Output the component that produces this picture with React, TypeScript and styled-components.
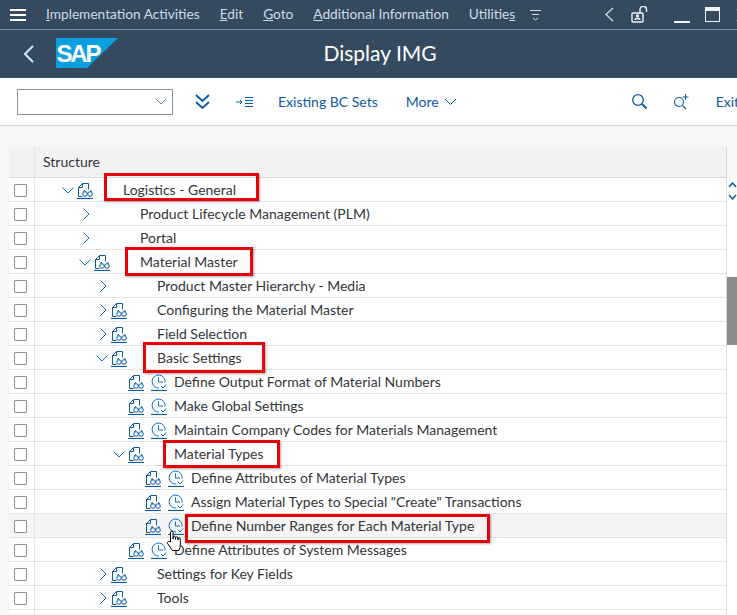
import styled, { createGlobalStyle } from 'styled-components'

type TreeRow = {
  level: number
  label: string
  chevron?: 'open' | 'closed'
  doc?: boolean
  clock?: boolean
  hovered?: boolean
  box?: { left: number; top: number; width: number; height: number }
  cursor?: boolean
}

const ROWS: TreeRow[] = [
  { level: 0, label: 'Logistics - General', chevron: 'open', doc: true, box: { left: -19, top: -8, width: 155, height: 28 } },
  { level: 1, label: 'Product Lifecycle Management (PLM)', chevron: 'closed' },
  { level: 1, label: 'Portal', chevron: 'closed' },
  { level: 1, label: 'Material Master', chevron: 'open', doc: true, box: { left: -15, top: -6, width: 128, height: 29 } },
  { level: 2, label: 'Product Master Hierarchy - Media', chevron: 'closed' },
  { level: 2, label: 'Configuring the Material Master', chevron: 'closed', doc: true },
  { level: 2, label: 'Field Selection', chevron: 'closed', doc: true },
  { level: 2, label: 'Basic Settings', chevron: 'open', doc: true, box: { left: -14, top: -7, width: 122, height: 31 } },
  { level: 3, label: 'Define Output Format of Material Numbers', doc: true, clock: true },
  { level: 3, label: 'Make Global Settings', doc: true, clock: true },
  { level: 3, label: 'Maintain Company Codes for Materials Management', doc: true, clock: true },
  { level: 3, label: 'Material Types', chevron: 'open', doc: true, box: { left: -11, top: -5, width: 117, height: 28 } },
  { level: 4, label: 'Define Attributes of Material Types', doc: true, clock: true },
  { level: 4, label: 'Assign Material Types to Special "Create" Transactions', doc: true, clock: true },
  { level: 4, label: 'Define Number Ranges for Each Material Type', doc: true, clock: true, hovered: true, box: { left: -6, top: -3, width: 305, height: 29 }, cursor: true },
  { level: 3, label: 'Define Attributes of System Messages', doc: true, clock: true },
  { level: 2, label: 'Settings for Key Fields', chevron: 'closed', doc: true },
  { level: 2, label: 'Tools', chevron: 'closed', doc: true },
]

const MENU = [
  { before: '', key: 'I', after: 'mplementation Activities' },
  { before: '', key: 'E', after: 'dit' },
  { before: '', key: 'G', after: 'oto' },
  { before: '', key: 'A', after: 'dditional Information' },
  { before: 'Utilitie', key: 's', after: '' },
]

const GlobalStyle = createGlobalStyle`
  html, body {
    margin: 0;
    padding: 0;
    height: 615px;
    overflow: hidden;
    background: #f7f7f7;
    font-family: Lato, "Open Sans", "Liberation Sans", sans-serif;
  }
`

const Page = styled.div`
  width: 737px;
  height: 615px;
  overflow: hidden;
`

const MenuBar = styled.div`
  height: 29px;
  background: #354a5f;
  border-bottom: 1px solid #7d92ab;
  display: flex;
  align-items: center;
  padding-left: 10px;
  color: #d1dbe6;
  overflow: hidden;
`

const MenuList = styled.div`
  display: flex;
  gap: 20px;
  margin-left: 20px;
  padding-bottom: 3px;
  font-size: 13.7px;
  white-space: nowrap;
`

const MenuControls = styled.div`
  display: flex;
  align-items: center;
  margin-left: 14px;
  flex: none;
`

const TitleBar = styled.div`
  height: 48px;
  background: #354a5f;
  position: relative;
  display: flex;
  align-items: center;
  padding-left: 22px;
`

const Title = styled.div`
  position: absolute;
  left: 0;
  right: 0;
  top: 9px;
  padding-left: 23px;
  text-align: center;
  color: #fff;
  font-size: 21px;
  line-height: 28px;
`

const LogoSlot = styled.span`
  margin-left: 22px;
  margin-top: -2px;
  display: inline-flex;
`

const Toolbar = styled.div`
  height: 47px;
  background: #fff;
  border-bottom: 1px solid #d9d9d9;
  display: flex;
  align-items: center;
  padding-left: 17px;
  color: #0a5ba3;
  font-size: 14px;
  white-space: nowrap;
`

const Combo = styled.div`
  width: 156px;
  height: 26px;
  flex: none;
  border: 1px solid #89919a;
  display: flex;
  align-items: center;
  justify-content: flex-end;
  padding-right: 5px;
  box-sizing: border-box;
`

const ToolLabel = styled.span<{ $left: number }>`
  margin-left: ${(p) => p.$left}px;
  display: inline-flex;
  align-items: center;
  gap: 5px;
`

const ToolIcon = styled.span<{ $left: number }>`
  margin-left: ${(p) => p.$left}px;
  display: inline-flex;
  flex: none;
`

const Content = styled.div`
  padding: 21px 0 0 9px;
  display: flex;
`

const Table = styled.div`
  width: 717px;
  flex: none;
  background: #fff;
  border-right: 1px solid #d9d9d9;
`

const HeadRow = styled.div`
  height: 30px;
  display: flex;
  background: #f2f2f2;
  border-bottom: 1px solid #d9d9d9;
`

const Row = styled.div<{ $hovered?: boolean }>`
  height: 23px;
  display: flex;
  background: ${(p) => (p.$hovered ? '#f5f5f5' : '#fff')};
  border-bottom: 1px solid #e5e5e5;
`

const SelectCell = styled.div`
  width: 26px;
  flex: none;
  border-right: 1px solid #e5e5e5;
  display: flex;
  align-items: center;
  padding: 1px 0 0 5px;
  box-sizing: border-box;
`

const Check = styled.span`
  width: 13px;
  height: 13px;
  box-sizing: border-box;
  border: 1px solid #89919a;
  background: #fff;
  border-radius: 1px;
`

const HeadLabel = styled.div`
  padding-left: 8px;
  line-height: 30px;
  font-size: 14px;
  color: #32363a;
`

const TreeCell = styled.div<{ $level: number }>`
  display: flex;
  align-items: center;
  padding-left: ${(p) => 24 + p.$level * 17}px;
  font-size: 14px;
  color: #32363a;
  white-space: nowrap;
`

const ChevronSlot = styled.span`
  width: 18px;
  flex: none;
  display: flex;
  justify-content: center;
`

const IconSlot = styled.span`
  width: 16px;
  height: 19px;
  flex: none;
  display: flex;
  justify-content: center;
`

const ClockSlot = styled.span`
  width: 30px;
  height: 19px;
  flex: none;
  display: flex;
  padding-left: 7px;
  box-sizing: border-box;
  position: relative;
`

const Label = styled.span`
  position: relative;
`

const RedBox = styled.span`
  position: absolute;
  border: 3px solid #e8000b;
  box-shadow: 1px 1px 2px rgba(0, 0, 0, 0.35);
  box-sizing: border-box;
  pointer-events: none;
`

const Hand = styled.svg`
  position: absolute;
  left: 5px;
  top: 14px;
  z-index: 2;
`

const ScrollRail = styled.div`
  width: 11px;
  height: 440px;
  margin-top: 31px;
  flex: none;
  padding-top: 4px;
  background: #fff;
  display: flex;
  flex-direction: column;
  align-items: center;
  gap: 6px;
  position: relative;
`

const ScrollThumb = styled.div`
  position: absolute;
  top: 99px;
  left: 0;
  width: 11px;
  height: 68px;
  background: #8c8c8c;
`

function Chevron({ open }: { open: boolean }) {
  return (
    <svg width="12" height="12" viewBox="0 0 12 12" fill="none" stroke="#0a6ed1" strokeWidth="1">
      <path d={open ? 'M.5 3.500 6 9 11.500 3.500' : 'M4.500 .5 10 6 4.500 11.500'} />
    </svg>
  )
}

function DocIcon() {
  return (
    <svg width="16" height="19" viewBox="0 0 16 19" fill="none" stroke="#0a5ba3" strokeWidth="1">
      <path d="M5.500 16.500H1.500V7.500L5.500 3.500H11.500V9.500" />
      <path d="M1.500 7.500H5.500V3.500" />
      <path d="M0 18.500H16" strokeWidth="1.200" />
      <circle cx="8" cy="14" r="2.300" />
      <circle cx="13" cy="14" r="2.300" />
      <path d="M10.300 13.500h.4M6.500 12 7.500 10M14.500 12 13.500 10" />
    </svg>
  )
}

function ClockIcon() {
  return (
    <svg width="16" height="19" viewBox="0 0 16 19" fill="none" stroke="#0a6ed1" strokeWidth="1">
      <path d="M14 10.500A6.500 6.500 0 1 0 8 16" />
      <path d="M7.500 5.500V10H12" />
      <path d="M10 14 12 16 15 12.500" />
      <path d="M0 18.500H16" stroke="#0a5ba3" strokeWidth="1.200" />
    </svg>
  )
}

function SapLogo() {
  return (
    <svg width="62" height="30" viewBox="0 0 62 30">
      <path d="M0 0H62L31 30H0Z" fill="#0a9fe0" />
      <text x="0.500" y="24" fontFamily="Liberation Sans" fontWeight="700" fontSize="24" letterSpacing="-2.200" fill="#fff">
        SAP
      </text>
    </svg>
  )
}

export default function App() {
  return (
    <Page>
      <GlobalStyle />
      <MenuBar>
        <svg width="16" height="12" viewBox="0 0 16 12" stroke="#fff" strokeWidth="2" style={{ flex: 'none' }}>
          <path d="M0 1H16M0 6H16M0 11H16" />
        </svg>
        <MenuList>
          {MENU.map((item) => (
            <span key={item.key}>
              {item.before}
              <u>{item.key}</u>
              {item.after}
            </span>
          ))}
        </MenuList>
        <MenuControls>
          <svg width="13" height="12" viewBox="0 0 13 12" fill="none" stroke="#d1dbe6">
            <path d="M1 1.500H12M3 5.500H10M4 9 6.500 11 9 9" />
          </svg>
          <ToolIcon $left={63}>
            <svg width="9" height="15" viewBox="0 0 9 15" fill="none" stroke="#d1dbe6" strokeWidth="1.400">
              <path d="M8 1 1 7.500 8 14" />
            </svg>
          </ToolIcon>
          <ToolIcon $left={17}>
            <svg width="17" height="17" viewBox="0 0 17 17" fill="none" stroke="#f0f4f8" strokeWidth="1.400">
              <rect x="1" y="7" width="11" height="9" rx="1" />
              <path d="M9 7V3.500a3 3 0 0 1 6.500 0V6" />
              <circle cx="6.500" cy="10" r="1" />
              <path d="M4 14c0-2 5-2 5 0" />
            </svg>
          </ToolIcon>
          <ToolIcon $left={26}>
            <svg width="16" height="16" viewBox="0 0 16 16" stroke="#f0f4f8" strokeWidth="2">
              <path d="M0 15H16" />
            </svg>
          </ToolIcon>
          <ToolIcon $left={15}>
            <svg width="15" height="15" viewBox="0 0 15 15" fill="none" stroke="#f0f4f8">
              <rect x="0.500" y="0.500" width="14" height="14" />
              <path d="M0 2.500H15" strokeWidth="3" />
            </svg>
          </ToolIcon>
          <ToolIcon $left={16}>
            <svg width="14" height="14" viewBox="0 0 14 14" fill="none" stroke="#f0f4f8" strokeWidth="1.400">
              <path d="M1 1 13 13M13 1 1 13" />
            </svg>
          </ToolIcon>
        </MenuControls>
      </MenuBar>
      <TitleBar>
        <svg width="12" height="18" viewBox="0 0 12 18" fill="none" stroke="#d1e8ff" strokeWidth="2">
          <path d="M11 1 3 9 11 17" />
        </svg>
        <LogoSlot>
          <SapLogo />
        </LogoSlot>
        <Title>Display IMG</Title>
      </TitleBar>
      <Toolbar>
        <Combo>
          <svg width="12" height="7" viewBox="0 0 12 7" fill="none" stroke="#5b86b8">
            <path d="M1 1 6 6 11 1" />
          </svg>
        </Combo>
        <ToolIcon $left={22}>
          <svg width="15" height="16" viewBox="0 0 15 16" fill="none" stroke="#0a5ba3" strokeWidth="2">
            <path d="M1 1 7.500 7 14 1M1 8 7.500 14 14 8" />
          </svg>
        </ToolIcon>
        <ToolIcon $left={26}>
          <svg width="17" height="10" viewBox="0 0 17 10" fill="none" stroke="#0a5ba3">
            <path d="M0 5H6M4 3 6 5 4 7M9 .5H17M9 3.500H17M9 6.500H17M9 9.500H17" />
          </svg>
        </ToolIcon>
        <ToolLabel $left={25}>Existing BC Sets</ToolLabel>
        <ToolLabel $left={28}>
          More
          <svg width="13" height="8" viewBox="0 0 13 8" fill="none" stroke="#0a5ba3">
            <path d="M1 1 6.500 6.500 12 1" />
          </svg>
        </ToolLabel>
        <ToolIcon $left={175}>
          <svg width="15" height="15" viewBox="0 0 15 15" fill="none" stroke="#0a5ba3" strokeWidth="1.300">
            <circle cx="6" cy="6" r="5.300" />
            <path d="M10 10 14.500 14.500" strokeWidth="2" />
          </svg>
        </ToolIcon>
        <ToolIcon $left={26}>
          <svg width="16" height="16" viewBox="0 0 16 16" fill="none" stroke="#0a5ba3" strokeWidth="1.100">
            <circle cx="6" cy="8" r="4.500" />
            <path d="M9.500 11.500 13 15M12.500 0V6M9.500 3H15.500" />
          </svg>
        </ToolIcon>
        <ToolLabel $left={27}>Exit</ToolLabel>
      </Toolbar>
      <Content>
        <Table>
          <HeadRow>
            <SelectCell />
            <HeadLabel>Structure</HeadLabel>
          </HeadRow>
          {ROWS.map((row) => (
            <Row key={row.label} $hovered={row.hovered}>
              <SelectCell>
                <Check />
              </SelectCell>
              <TreeCell $level={row.level}>
                <ChevronSlot>{row.chevron && <Chevron open={row.chevron === 'open'} />}</ChevronSlot>
                <IconSlot>{row.doc && <DocIcon />}</IconSlot>
                <ClockSlot>
                  {row.clock && <ClockIcon />}
                  {row.cursor && (
                    <Hand width="17" height="22" viewBox="0 0 17 22" fill="#fff" stroke="#000">
                      <path d="M4.500 12V2.500a1.300 1.300 0 0 1 2.600 0V9V7.500a1.200 1.200 0 0 1 2.400 0V9.500V8a1.200 1.200 0 0 1 2.400 0V10V9a1.200 1.200 0 0 1 2.400 0V15c0 2-.5 3.500-1.500 5.500H6.500L1.500 13.500c-1-1.500 1.500-3 3-1.500Z" />
                    </Hand>
                  )}
                </ClockSlot>
                <Label>
                  {row.label}
                  {row.box && (
                    <RedBox
                      style={{ left: row.box.left, top: row.box.top, width: row.box.width, height: row.box.height }}
                    />
                  )}
                </Label>
              </TreeCell>
            </Row>
          ))}
          <Row>
            <SelectCell />
          </Row>
        </Table>
        <ScrollRail>
          <svg width="9" height="6" viewBox="0 0 9 6" fill="none" stroke="#0a5ba3" strokeWidth="1.500">
            <path d="M1 5 4.500 1 8 5" />
          </svg>
          <svg width="9" height="6" viewBox="0 0 9 6" fill="none" stroke="#0a5ba3" strokeWidth="1.500">
            <path d="M1 1 4.500 5 8 1" />
          </svg>
          <ScrollThumb />
        </ScrollRail>
      </Content>
    </Page>
  )
}
